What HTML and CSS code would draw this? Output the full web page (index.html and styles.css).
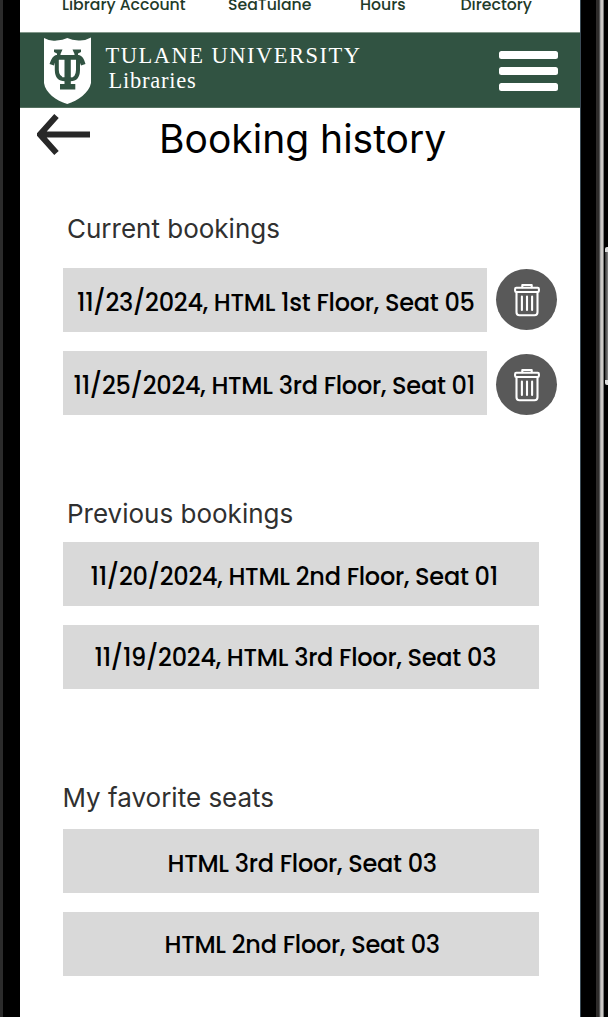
FILE: index.html
```html
<!DOCTYPE html>
<html lang="en">
<head>
<meta charset="utf-8">
<title>Booking history</title>
<link rel="stylesheet" href="styles.css">
</head>
<body>
<svg class="defs" width="0" height="0">
  <symbol id="trash" viewBox="0 0 26 34">
    <g fill="none" stroke="#fff" stroke-width="2.100" stroke-linejoin="round" stroke-linecap="round">
      <path d="M8.300 4.300V2h9.400v2.300"/>
      <rect x="1.100" y="4.800" width="23.800" height="4.200" rx="1.200"/>
      <path d="M2.500 9v20.200q0 3 3 3h15q3 0 3-3V9"/>
      <path d="M7.900 13.500v13.500M13 13.500v13.500M18.100 13.500v13.500"/>
    </g>
  </symbol>
</svg>
<div class="phone">
  <div class="bezel-left"></div>
  <main class="screen">
    <nav class="links">
      <a class="l1">Library Account</a><a class="l2">SeaTulane</a><a class="l3">Hours</a><a class="l4">Directory</a>
    </nav>
    <header class="brand">
      <svg class="shield" width="48" height="68" viewBox="0 0 48 68">
        <path fill="#fff" d="M1 1Q7 4.500 13.500 3.500Q20 3 24.300 1Q29 3.200 35.500 3.500Q42 4 48 .5V46C46 56 35 63.500 24.300 67C13 63.500 2.500 56 1 46Z"/>
        <path d="M13.800 22V33Q14 42.300 22 42.300H27.500Q34.800 42.300 35 33V22" fill="none" stroke="#315342" stroke-width="4"/>
        <path d="M20.300 23v17.300M28.800 23v17.300" stroke="#fff" stroke-width="2"/>
        <g fill="#315342">
          <path d="M11 12.500h8.500l-2 4.500v2H14v-2.500l-3-1.500zM29.500 12.500H38v2.500l-3 1.500v2.500h-3.500v-2z"/>
          <path d="M13 18H36Q40.500 19 42.500 27L38 28.500Q36.500 23.500 33 22.800H16Q12 23.500 11 28.500L6.500 27Q9 19 13 18Z"/>
          <path d="M21.500 20h6.300v27h4.500v5.500H17V47h4.500z"/>
        </g>
      </svg>
      <div class="wordmark"><span class="university">TULANE UNIVERSITY</span><span class="libraries">Libraries</span></div>
      <div class="menu"><i></i><i></i><i></i></div>
    </header>
    <div class="titlebar">
      <svg class="back" width="54" height="42" viewBox="0 0 54 42"><path d="M53 20.500H4M19.500 2L3 20.500L19.500 39" fill="none" stroke="#282828" stroke-width="6"/></svg>
      <h1>Booking history</h1>
    </div>
    <section class="group current">
      <h2>Current bookings</h2>
      <div class="row"><div class="card"><span class="b1">11/23/2024, HTML 1st Floor, Seat 05</span></div><button><svg width="26" height="34"><use href="#trash"/></svg></button></div>
      <div class="row"><div class="card"><span class="b2">11/25/2024, HTML 3rd Floor, Seat 01</span></div><button class="low"><svg width="26" height="34"><use href="#trash"/></svg></button></div>
    </section>
    <section class="group previous">
      <h2>Previous bookings</h2>
      <div class="row"><div class="card"><span class="b3">11/20/2024, HTML 2nd Floor, Seat 01</span></div></div>
      <div class="row"><div class="card up"><span class="b4">11/19/2024, HTML 3rd Floor, Seat 03</span></div></div>
    </section>
    <section class="group favorite">
      <h2>My favorite seats</h2>
      <div class="row"><div class="card"><span class="b5">HTML 3rd Floor, Seat 03</span></div></div>
      <div class="row"><div class="card up"><span class="b6">HTML 2nd Floor, Seat 03</span></div></div>
    </section>
  </main>
  <div class="bezel-right"><div class="side-button"></div></div>
</div>
</body>
</html>
```
FILE: styles.css
```css
* { box-sizing: border-box; }
body { margin: 0; background: #000; font-family: Poppins, Inter, "Open Sans", sans-serif; overflow: hidden; }
.defs { display: block; position: absolute; }
.phone { display: grid; grid-template-columns: 20px 560px 28px; height: 1017px; overflow: hidden; }
.bezel-left { background: linear-gradient(90deg, #2b2b2b 3px, #000 3px); }
.bezel-right { background: linear-gradient(90deg, #3b4c57 0 1px, #000 1px 16px, #2e2c2b 16px 19px, #555 19px 20px, #aaa 20px 21px, #ccc9c6 21px 23px, #777 23px 24px, #000 24px); }
.side-button { margin: 247px 0 0 25px; height: 138px; background: linear-gradient(90deg, #333, #888); border-top: 5px solid #ddd; border-bottom: 5px solid #ddd; border-radius: 2px 0 0 2px; }
.screen { background: #fff; overflow: hidden; }
.links { height: 32px; display: flex; color: #1f3b2a; font-size: 15.700px; font-weight: 500; line-height: 20px; white-space: nowrap; }
.links a { margin-top: -5px; height: 20px; }
.l1 { width: 166px; margin-left: 42px; }
.l2 { width: 132px; }
.l3 { width: 100.500px; }
.brand { height: 76px; background: #315342; border-top: 1px solid #819789; border-bottom: 1px solid #54705f; display: flex; align-items: flex-start; }
.shield { margin: 4px 0 0 23px; flex: none; }
.wordmark { width: 390px; margin-left: 14.500px; padding-top: 11px; display: flex; flex-direction: column; color: #fff; font-family: "Liberation Serif", serif; white-space: nowrap; }
.university { font-size: 22.500px; line-height: 24px; letter-spacing: 1.500px; }
.libraries { font-size: 22.500px; line-height: 25px; margin-left: 3px; letter-spacing: .750px; }
.menu { width: 59px; margin: 18px 0 0 3.500px; display: grid; gap: 8px; }
.menu i { height: 8px; background: #fff; border-radius: 2.500px; }
.titlebar { height: 92px; display: flex; align-items: flex-start; }
.back { margin: 6px 0 0 17px; flex: none; }
h1, h2 { margin: 0; font-family: Inter, sans-serif; white-space: nowrap; font-weight: 400; }
h1 { font-size: 39px; line-height: 48px; margin: 7px 0 0 68px; color: #000; }
h2 { font-size: 26px; line-height: 32px; color: #303030; padding-left: 4.500px; height: 32px; }
.group { padding-left: 42.500px; }
.current { padding-top: 13px; height: 285px; }
.current h2 { margin-bottom: 23px; }
.previous { padding-top: 13px; height: 284px; }
.previous h2 { margin-bottom: 12px; }
.favorite { padding-top: 12.500px; }
.favorite h2 { margin-bottom: 15.500px; padding-left: 0; }
.row { display: flex; margin-bottom: 19px; height: 64px; }
.card { width: 476.500px; height: 64px; background: #d9d9d9; display: flex; align-items: center; font-size: 24px; font-weight: 500; letter-spacing: -.250px; line-height: 30px; white-space: nowrap; padding-top: 6px; color: #000; }
.current .card { width: 424.500px; }
.card.up { padding-top: 2px; }
.favorite .card.up { padding-top: 1px; }
.b1 { margin-left: 14.500px; }
.b2 { margin-left: 11px; }
.b3 { margin-left: 28px; }
.b4 { margin-left: 32px; }
.b5 { margin-left: 105px; }
.b6 { margin-left: 102px; }
button { width: 61px; height: 61px; flex: none; margin: 1px 0 0 9px; border: 0; border-radius: 50%; background: #595959; padding: 0; display: grid; place-items: center; }
button.low { margin-top: 3px; }
```
